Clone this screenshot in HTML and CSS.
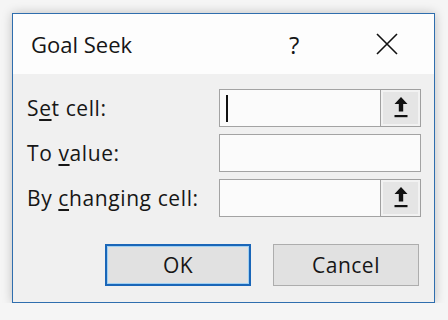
FILE: index.html
```html
<!DOCTYPE html>
<html lang="en">
  <head>
    <meta charset="UTF-8" />
    <meta name="viewport" content="width=device-width, initial-scale=1.0" />
    <title>Goal Seek</title>
    <link rel="stylesheet" href="styles.css">
  </head>
  <body>
    <div class="dialog">
      <div class="titlebar">
        <span class="title">Goal Seek</span>
        <span class="help">?</span>
        <span class="close">
          <svg width="22" height="22" viewBox="0 0 22 22">
            <path d="M1 1 L21 21 M21 1 L1 21" stroke="#111" stroke-width="1.6" fill="none" />
          </svg>
        </span>
      </div>

      <div class="content">
        <div class="row">
          <label>S<u>e</u>t cell:</label>
          <div class="field">
            <div class="input"><span class="caret"></span></div>
            <button class="ref">
              <svg width="14" height="24" viewBox="0 0 14 24">
                <path d="M7 1 L13.5 8 L9.2 8 L9.2 15.5 L4.8 15.5 L4.8 8 L0.5 8 Z" fill="#111" />
                <rect x="0.5" y="19" width="13" height="2.2" fill="#111" />
              </svg>
            </button>
          </div>
        </div>
        <div class="row">
          <label>To <u>v</u>alue:</label>
          <div class="field">
            <div class="input"></div>
          </div>
        </div>
        <div class="row">
          <label>By <u>c</u>hanging cell:</label>
          <div class="field">
            <div class="input"></div>
            <button class="ref">
              <svg width="14" height="24" viewBox="0 0 14 24">
                <path d="M7 1 L13.5 8 L9.2 8 L9.2 15.5 L4.8 15.5 L4.8 8 L0.5 8 Z" fill="#111" />
                <rect x="0.5" y="19" width="13" height="2.2" fill="#111" />
              </svg>
            </button>
          </div>
        </div>

        <div class="actions">
          <button class="btn default">OK</button>
          <button class="btn">Cancel</button>
        </div>
      </div>
    </div>
  </body>
</html>
```

FILE: styles.css
```css
body {
  margin: 0;
  padding: 13px 13px 0 12px;
  background: #f5f5f5;
  font-family: "Open Sans", "Noto Sans", sans-serif;
  color: #161616;
}
.dialog {
  width: 421px;
  height: 288px;
  border: 1px solid #2f6eae;
  background: #f0f0f0;
  box-shadow: 0 0 10px rgba(0, 0, 0, 0.22);
  display: flex;
  flex-direction: column;
}
.titlebar {
  height: 60px;
  background: #fdfdfd;
  display: flex;
  align-items: center;
  padding-left: 18px;
}
.title {
  font-size: 22px;
  flex: 1;
}
.help {
  font-size: 24px;
  width: 14px;
  margin-right: 73px;
}
.close {
  display: flex;
  margin-right: 36px;
}
.content {
  flex: 1;
  padding: 15px 13px 16px 14px;
  display: flex;
  flex-direction: column;
}
.row {
  display: flex;
  align-items: center;
  height: 38px;
  margin-bottom: 7px;
}
.row label {
  width: 192px;
  font-size: 21px;
  letter-spacing: 0.6px;
}
.row u {
  text-underline-offset: 3px;
}
.field {
  flex: 1;
  display: flex;
  height: 38px;
}
.input {
  flex: 1;
  background: #fbfbfb;
  border: 1px solid #a3a3a3;
  display: flex;
  align-items: center;
  padding-left: 6px;
}
.caret {
  width: 2px;
  height: 27px;
  background: #111;
}
.ref {
  width: 41px;
  height: 38px;
  padding: 0;
  margin: 0;
  background: #e5e5e5;
  border: 1px solid #a0a0a0;
  box-shadow: inset 0 0 0 2px #f2f2f2;
  display: flex;
  align-items: center;
  justify-content: center;
  margin-left: -1px;
}
.actions {
  margin-top: auto;
  display: flex;
  justify-content: flex-end;
  gap: 22px;
  padding-right: 2px;
}
.btn {
  width: 146px;
  height: 42px;
  background: #e1e1e1;
  border: 1px solid #adadad;
  font-family: "Open Sans", "Noto Sans", sans-serif;
  font-size: 21px;
  letter-spacing: 0.5px;
  color: #161616;
  padding: 0;
}
.btn.default {
  border: 2px solid #1a66b8;
  box-shadow: inset 0 0 0 1px #9fd0f3;
}
```
